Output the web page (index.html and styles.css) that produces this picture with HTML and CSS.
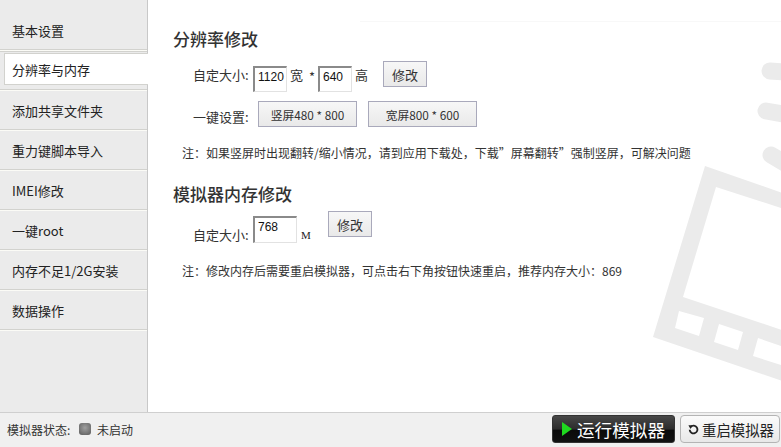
FILE: index.html
```html
<!DOCTYPE html>
<html lang="zh-CN">
<head>
    <meta charset="UTF-8">
    <meta name="viewport" content="width=device-width, initial-scale=1.0">
    <title>模拟器设置</title>
    <link rel="stylesheet" href="styles.css">
</head>
<body>
    <div class="app">
        <div class="main">
            <!-- Left menu -->
            <div class="sidebar">
                <div class="menu-item">基本设置</div>
                <div class="menu-item active"><span class="active-box">分辨率与内存</span></div>
                <div class="menu-item">添加共享文件夹</div>
                <div class="menu-item">重力键脚本导入</div>
                <div class="menu-item">IMEI修改</div>
                <div class="menu-item">一键root</div>
                <div class="menu-item">内存不足1/2G安装</div>
                <div class="menu-item">数据操作</div>
            </div>

            <div class="content">
                <!-- Watermark behind the form -->
                <svg class="watermark" width="781" height="412" viewBox="0 0 781 412">
                    <path fill="#ebebeb" fill-rule="evenodd" d="M705 166L800 199L800 387L653 337Z M716 187L683 297L800 336L800 214Z M679 311L675 328L699 336L704 318Z M719 324L714 342L738 350L743 332Z M758 338L753 356L781 365L790 349Z"/>
                    <g stroke="#ebebeb" stroke-width="17" stroke-linecap="round" fill="none">
                        <path d="M770 71L800 73"/>
                        <path d="M766 111L800 117"/>
                        <path d="M771 155L800 172"/>
                    </g>
                </svg>
                <div class="top-line"></div>

                <h2 class="title">分辨率修改</h2>
                <div class="row size-row">
                    <span class="label">自定大小:</span>
                    <input class="field" type="text" value="1120">
                    <span class="unit">宽</span>
                    <span class="times">*</span>
                    <input class="field" type="text" value="640">
                    <span class="unit">高</span>
                    <button class="btn btn-small">修改</button>
                </div>
                <div class="row preset-row">
                    <span class="label">一键设置:</span>
                    <button class="btn btn-tall">竖屏480 * 800</button>
                    <button class="btn btn-wide">宽屏800 * 600</button>
                </div>
                <p class="note">注：如果竖屏时出现翻转/缩小情况，请到应用下载处，下载”屏幕翻转”强制竖屏，可解决问题</p>

                <h2 class="title title-memory">模拟器内存修改</h2>
                <div class="row memory-row">
                    <span class="label">自定大小:</span>
                    <input class="field field-memory" type="text" value="768">
                    <span class="unit-m">M</span>
                    <button class="btn btn-small">修改</button>
                </div>
                <p class="note note-memory">注：修改内存后需要重启模拟器，可点击右下角按钮快速重启，推荐内存大小：869</p>
            </div>
        </div>

        <!-- Bottom status bar -->
        <div class="statusbar">
            <span class="status-label">模拟器状态:</span>
            <span class="led"></span>
            <span class="status-text">未启动</span>
            <button class="run-btn">
                <svg width="10" height="14" viewBox="0 0 10 14"><path fill="#1fd81f" d="M0 0L10 7L0 14Z"/></svg>
                运行模拟器
            </button>
            <button class="restart-btn">
                <svg width="11" height="11" viewBox="0 0 13 13"><path fill="none" stroke="#222" stroke-width="2.2" d="M3.2 3.4A4.6 4.6 0 1 1 2 6.8"/><path fill="#222" d="M0.5 1.5L5.5 1.5L3 6Z"/></svg>
                重启模拟器
            </button>
        </div>
    </div>
</body>
</html>
```

FILE: styles.css
```css
* {
    margin: 0;
    padding: 0;
    box-sizing: border-box;
}

body {
    font-family: 'Noto Sans CJK SC', 'Liberation Sans', sans-serif;
    font-size: 13px;
    color: #333;
    background: #fff;
    overflow: hidden;
}

.app {
    width: 781px;
    height: 447px;
    display: flex;
    flex-direction: column;
}

.main {
    height: 413px;
    display: flex;
    border-bottom: 1px solid #cfcfcf;
}

/* Left menu */
.sidebar {
    width: 148px;
    padding-top: 10px;
    background: #ebebeb;
    border-right: 1px solid #c8c8c8;
}

.menu-item {
    height: 40px;
    padding: 2px 0 0 12px;
    display: flex;
    align-items: center;
    color: #222;
    line-height: 1;
    border-bottom: 1px solid #d2d2ce;
    box-shadow: 0 1px 0 #fbfbf6;
}

.menu-item.active {
    padding: 0;
    align-items: flex-start;
    background: linear-gradient(#fbfbf6 1px, #d2d2ce 1px, #d2d2ce 2px, transparent 2px);
}

.active-box {
    flex: 1;
    height: 32px;
    margin: 3px -1px 0 4px;
    padding-left: 7px;
    display: flex;
    align-items: center;
    background: #fff;
    border: 1px solid #d2d2ce;
    border-right: none;
}

/* Form area */
.content {
    flex: 1;
    position: relative;
    padding: 28px 0 0 25px;
}

.watermark {
    position: absolute;
    left: -148px;
    top: 0;
    pointer-events: none;
}

.top-line {
    position: absolute;
    left: 212px;
    right: 0;
    top: 21px;
    height: 1px;
    background: #f8f8f8;
}

.title {
    position: relative;
    height: 22px;
    font-size: 17px;
    line-height: 22px;
    font-weight: 500;
    color: #333;
}

.title-memory {
    margin-top: 21px;
}

.row {
    position: relative;
    display: flex;
    padding-left: 20px;
    line-height: 18px;
}

.label {
    width: 60px;
    flex-shrink: 0;
}

.size-row {
    height: 40px;
    margin-top: 11px;
}

.size-row .label,
.size-row .unit {
    margin-top: 5px;
}

.size-row .field {
    margin-top: 5px;
    padding-bottom: 5px;
}

.size-row .times {
    margin-top: 7px;
}

.unit {
    margin: 0 3px;
}

.times {
    margin: 0 2px 0 3px;
    width: 7px;
}

.size-row .btn-small {
    margin-left: 12px;
}

.preset-row {
    height: 39px;
}

.preset-row .label {
    margin: 7px 5px 0 0;
}

.preset-row .btn-wide {
    margin-left: 11px;
}

.field {
    width: 34px;
    height: 26px;
    padding-left: 3px;
    font-family: 'Liberation Sans', sans-serif;
    font-size: 12px;
    color: #111;
    outline: none;
    border: 1px solid #e2e2e2;
    border-top: 2px solid #8a8a8a;
    border-left: 2px solid #8a8a8a;
}

.btn {
    height: 26px;
    font-family: inherit;
    font-size: 12px;
    color: #333;
    background: linear-gradient(#f7f7f7, #e9e9e9);
    border: 1px solid #a9a9bb;
}

.btn-small {
    width: 44px;
    font-size: 13px;
}

.btn-tall {
    width: 99px;
    font-size: 11.8px;
}

.btn-wide {
    width: 109px;
    font-size: 11.8px;
}

.note {
    position: relative;
    margin-top: 4px;
    padding-left: 9px;
    font-size: 12px;
    line-height: 18px;
    color: #333;
}

.memory-row {
    height: 44px;
    margin-top: 6px;
}

.memory-row .label {
    margin-top: 15px;
}

.field-memory {
    width: 44px;
    height: 27px;
    margin-top: 5px;
    padding: 0 0 6px 3px;
}

.unit-m {
    margin: 15px 0 0 4px;
    width: 27px;
    font-family: 'Liberation Serif', serif;
    font-size: 11px;
    color: #222;
}

.note-memory {
    margin-top: 7px;
}

/* Bottom status bar */
.statusbar {
    flex: 1;
    display: flex;
    align-items: center;
    padding: 0 1px 2px 7px;
    background: #f0f0f0;
    font-size: 12px;
}

.status-label {
    width: 72px;
}

.led {
    width: 12px;
    height: 12px;
    margin-right: 6px;
    border-radius: 3px;
    background: radial-gradient(circle at 50% 40%, #a0a0a0, #5a5a5a);
}

.status-text {
    flex: 1;
}

.run-btn {
    width: 123px;
    height: 28px;
    margin-right: 5px;
    display: flex;
    align-items: center;
    gap: 5px;
    padding-left: 9px;
    font-family: inherit;
    font-size: 17.6px;
    color: #fff;
    border: 1px solid #333;
    border-radius: 3px;
    background: linear-gradient(#484848, #2c2c2c 50%, #0a0a0a 55%, #111);
}

.restart-btn {
    width: 100px;
    height: 28px;
    display: flex;
    align-items: center;
    gap: 3px;
    padding-left: 7px;
    font-family: inherit;
    font-size: 14.4px;
    color: #222;
    border: 1px solid #b4b4b4;
    border-radius: 4px;
    background: linear-gradient(#fbfbfb, #e8e8e8);
}
```
